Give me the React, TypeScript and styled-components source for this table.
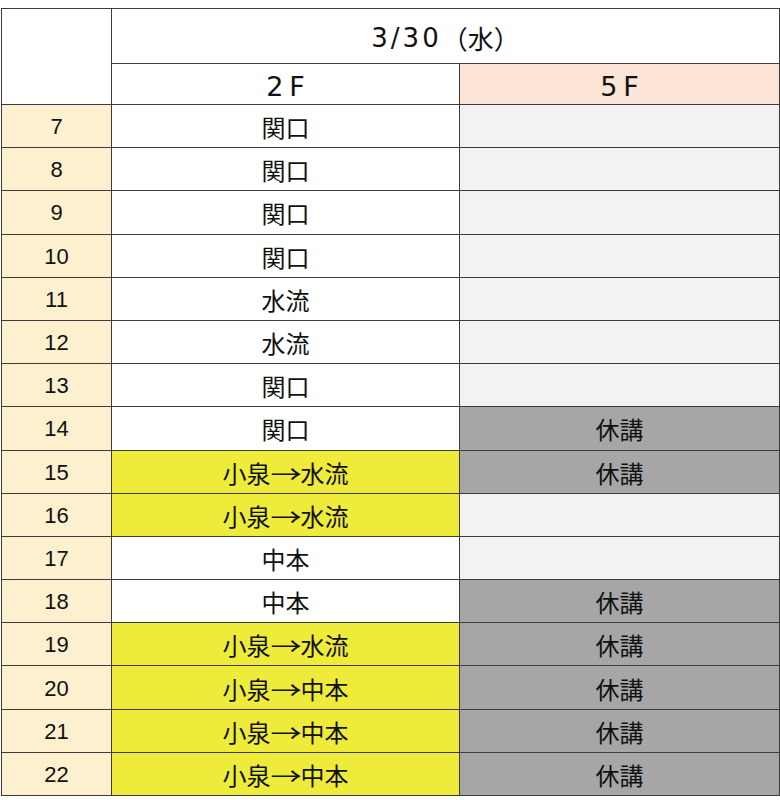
import { Fragment } from "react"
import styled, { createGlobalStyle } from "styled-components"

const GlobalStyle = createGlobalStyle`
    body {
        margin: 0;
        background: #ffffff;
    }
`

const Page = styled.div`
    padding: 8px 0 0 1px;
`

const Sheet = styled.div`
    display: grid;
    width: 779px;
    box-sizing: border-box;
    grid-template-columns: 109px 347px 319px;
    grid-template-rows: 54px 40px repeat(16, 42.1875px);
    gap: 1px;
    padding: 1px;
    background: #3c3c3c;
    font-family: "Noto Sans CJK JP", "Liberation Sans", sans-serif;
    color: #111;
`

const Cell = styled.div<{ $bg?: string }>`
    display: flex;
    align-items: center;
    justify-content: center;
    background: ${(p) => p.$bg || "#ffffff"};
    font-size: 24px;
    line-height: 1;
    padding-top: 2px;
`

const Corner = styled(Cell)`
    grid-row: 1 / span 2;
`

const Wide = styled.span`
    font-family: "DejaVu Sans", "Noto Sans CJK JP", sans-serif;
    font-size: 26px;
    letter-spacing: 3px;
`

const DateHead = styled(Cell)`
    grid-column: 2 / span 2;
    padding-top: 4px;
    font-size: 26px;
`

const FloorHead = styled(Cell)`
    padding-top: 4px;
    ${Wide} {
        font-size: 27px;
        letter-spacing: 6px;
        margin-right: -6px;
    }
`

const Hour = styled(Cell)`
    background: #fdf0cf;
    font-family: "Liberation Sans", Arial, sans-serif;
    font-size: 22px;
`

const Arrow = styled.span`
    display: inline-block;
    margin: 0 3px;
    transform: scaleX(1.3);
`

type Slot = { hour: number; second: string; moved?: boolean; fifth?: string }

const slots: Slot[] = [
    { hour: 7, second: "関口" },
    { hour: 8, second: "関口" },
    { hour: 9, second: "関口" },
    { hour: 10, second: "関口" },
    { hour: 11, second: "水流" },
    { hour: 12, second: "水流" },
    { hour: 13, second: "関口" },
    { hour: 14, second: "関口", fifth: "休講" },
    { hour: 15, second: "小泉→水流", moved: true, fifth: "休講" },
    { hour: 16, second: "小泉→水流", moved: true },
    { hour: 17, second: "中本" },
    { hour: 18, second: "中本", fifth: "休講" },
    { hour: 19, second: "小泉→水流", moved: true, fifth: "休講" },
    { hour: 20, second: "小泉→中本", moved: true, fifth: "休講" },
    { hour: 21, second: "小泉→中本", moved: true, fifth: "休講" },
    { hour: 22, second: "小泉→中本", moved: true, fifth: "休講" },
]

// the "→" is drawn a bit wider, like in the printed sheet
function Teacher({ text }: { text: string }) {
    const parts = text.split("→")
    if (parts.length < 2) return <>{text}</>
    return (
        <>
            {parts[0]}
            <Arrow>→</Arrow>
            {parts[1]}
        </>
    )
}

export default function App() {
    return (
        <Page>
            <GlobalStyle />
            <Sheet>
                <Corner />
                <DateHead>
                    <Wide>3/30</Wide>（水）
                </DateHead>
                <FloorHead>
                    <Wide>2F</Wide>
                </FloorHead>
                <FloorHead $bg="#fce4d6">
                    <Wide>5F</Wide>
                </FloorHead>
                {slots.map((s) => (
                    <Fragment key={s.hour}>
                        <Hour>{s.hour}</Hour>
                        <Cell $bg={s.moved ? "#efeb3a" : "#ffffff"}>
                            <Teacher text={s.second} />
                        </Cell>
                        <Cell $bg={s.fifth ? "#a6a6a6" : "#f2f2f2"}>{s.fifth}</Cell>
                    </Fragment>
                ))}
            </Sheet>
        </Page>
    )
}
